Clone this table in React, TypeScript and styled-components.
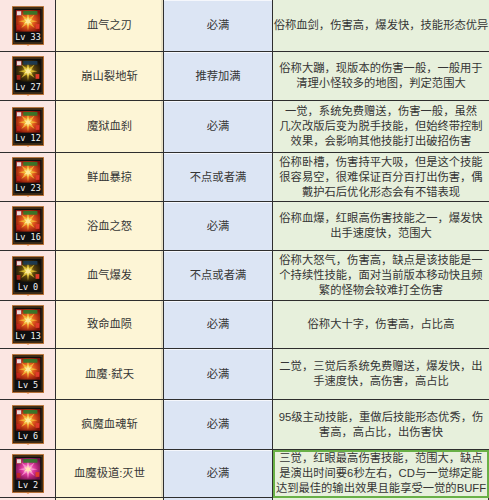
import React, { FunctionComponent } from 'react';
import styled, { createGlobalStyle } from 'styled-components';

type Art = 'red' | 'gold' | 'pink';

interface SkillRow {
  lv: number;
  name: string;
  rec: string;
  desc: string[];
  art: Art;
  height: number;
}

const rows: SkillRow[] = [
  {
    lv: 33,
    name: '血气之刃',
    rec: '必满',
    desc: ['俗称血剑，伤害高，爆发快，技能形态优异'],
    art: 'red',
    height: 52,
  },
  {
    lv: 27,
    name: '崩山裂地斩',
    rec: '推荐加满',
    desc: ['俗称大蹦，现版本的伤害一般，一般用于', '清理小怪较多的地图，判定范围大'],
    art: 'gold',
    height: 49,
  },
  {
    lv: 12,
    name: '魔狱血刹',
    rec: '必满',
    desc: [
      '一觉，系统免费赠送，伤害一般，虽然',
      '几次改版后变为脱手技能，但始终带控制',
      '效果，会影响其他技能打出破招伤害',
    ],
    art: 'red',
    height: 52,
  },
  {
    lv: 23,
    name: '鲜血暴掠',
    rec: '不点或者满',
    desc: [
      '俗称卧槽，伤害持平大吸，但是这个技能',
      '很容易空，很难保证百分百打出伤害，偶',
      '戴护石后优化形态会有不错表现',
    ],
    art: 'red',
    height: 49,
  },
  {
    lv: 16,
    name: '浴血之怒',
    rec: '必满',
    desc: ['俗称血爆，红眼高伤害技能之一，爆发快', '出手速度快，范围大'],
    art: 'red',
    height: 49,
  },
  {
    lv: 0,
    name: '血气爆发',
    rec: '不点或者满',
    desc: [
      '俗称大怒气，伤害高，缺点是该技能是一',
      '个持续性技能，面对当前版本移动快且频',
      '繁的怪物会较难打全伤害',
    ],
    art: 'gold',
    height: 50,
  },
  {
    lv: 13,
    name: '致命血陨',
    rec: '必满',
    desc: ['俗称大十字，伤害高，占比高'],
    art: 'red',
    height: 48,
  },
  {
    lv: 5,
    name: '血魔·弑天',
    rec: '必满',
    desc: ['二觉，三觉后系统免费赠送，爆发快，出', '手速度快，高伤害，高占比'],
    art: 'red',
    height: 51,
  },
  {
    lv: 6,
    name: '疯魔血魂斩',
    rec: '必满',
    desc: ['95级主动技能，重做后技能形态优秀，伤', '害高，高占比，出伤害快'],
    art: 'red',
    height: 50,
  },
  {
    lv: 2,
    name: '血魔极道:灭世',
    rec: '必满',
    desc: [
      '三觉，红眼最高伤害技能，范围大，缺点',
      '是演出时间要6秒左右，CD与一觉绑定能',
      '达到最佳的输出效果且能享受一觉的BUFF',
    ],
    art: 'pink',
    height: 48,
  },
];

const palettes: Record<Art, { outer: string; inner: string; glow: string }> = {
  red: { outer: '#7a0f06', inner: '#e0561c', glow: '#f7c93c' },
  gold: { outer: '#120c04', inner: '#5a430c', glow: '#f2d43a' },
  pink: { outer: '#6a0d44', inner: '#d9369a', glow: '#ff9fd6' },
};

const GlobalStyle = createGlobalStyle`
  html, body {
    margin: 0;
    padding: 0;
    background: #fbe6e2;
    overflow: hidden;
  }
  body {
    font-family: "Liberation Sans", "Noto Sans CJK SC", sans-serif;
  }
`;

const Table = styled.div`
  width: 489px;
  display: flex;
  flex-direction: column;
`;

const Row = styled.div<{ $height: number }>`
  display: grid;
  grid-template-columns: 56px 108px 109px 1fr;
  height: ${(p) => p.$height}px;
`;

const lineColor = '#2e2e2e';

const Cell = styled.div<{ $last?: boolean; $selected?: boolean }>`
  position: relative;
  box-sizing: border-box;
  display: flex;
  align-items: center;
  justify-content: center;
  border-bottom: 1px solid ${lineColor};
  border-right: ${(p) => (p.$last ? 'none' : `1px solid ${lineColor}`)};
  color: #353535;
  font-size: 11.3px;
  line-height: 15px;
  text-align: center;
  white-space: nowrap;
  overflow: hidden;
  outline: ${(p) => (p.$selected ? '2px solid #68b046' : 'none')};
  outline-offset: -2px;
  z-index: ${(p) => (p.$selected ? 1 : 0)};
`;

const IconCell = styled(Cell)`
  background: #fbe6e2;
`;

const NameCell = styled(Cell)`
  background: #fdf5d6;
  box-shadow: inset -2px 0 0 rgba(0, 0, 0, 0.08);
`;

const RecCell = styled(Cell)`
  background: #dce5f4;
  box-shadow: inset 0 1px 0 rgba(255, 255, 255, 0.7);
`;

const DescCell = styled(Cell)`
  background: #e7f0dc;
  flex-direction: column;
`;

const Filler = styled.div`
  height: 20px;
  display: grid;
  grid-template-columns: 56px 108px 109px 1fr;
`;

const FillCell = styled.div<{ $bg: string }>`
  background: ${(p) => p.$bg};
  border-right: 1px solid ${lineColor};
`;

const starPoints = (cx: number, cy: number, r1: number, r2: number, n: number): string => {
  const pts: string[] = [];
  for (let i = 0; i < n * 2; i += 1) {
    const r = i % 2 === 0 ? r1 : r2;
    const a = (Math.PI * i) / n - Math.PI / 2;
    pts.push(`${(cx + r * Math.cos(a)).toFixed(1)},${(cy + r * Math.sin(a)).toFixed(1)}`);
  }
  return pts.join(' ');
};

const SkillIcon: FunctionComponent<{ lv: number; art: Art; id: number }> = ({ lv, art, id }) => {
  const pal = palettes[art];
  const gid = `g${id}`;
  return (
    <svg width="32" height="40" viewBox="0 0 34 42">
      <defs>
        <radialGradient id={gid} cx="50%" cy="50%" r="60%">
          <stop offset="0%" stopColor={pal.glow} />
          <stop offset="45%" stopColor={pal.inner} />
          <stop offset="100%" stopColor={pal.outer} />
        </radialGradient>
      </defs>
      <rect x="0.5" y="0.5" width="33" height="40" fill="#1b130c" stroke="#b86a26" />
      <rect x="2" y="2" width="30" height="37" fill="#0e0e0e" stroke="#6b4a22" strokeWidth="0.8" />
      <rect x="4" y="4" width="26" height="23" fill={`url(#${gid})`} />
      <polygon points={starPoints(17, 16, 10, 3.5, 8)} fill={pal.glow} opacity="0.75" />
      <polygon points={starPoints(17, 16, 5, 2, 6)} fill="#fff3b0" opacity="0.8" />
      <rect x="5" y="5" width="5" height="5" fill="#e9d8d8" stroke="#a02020" strokeWidth="0.6" />
      <rect x="12" y="5" width="15" height="4" fill={art === 'gold' ? '#1c3b55' : '#2f7a2a'} opacity="0.9" />
      <rect x="25" y="19" width="4" height="5" fill="#e03a2a" />
      <rect x="5" y="20" width="4" height="5" fill="#c8281e" opacity="0.8" />
      <text
        x="17"
        y="36"
        fill="#f4f4f4"
        fontFamily="'DejaVu Sans Mono', monospace"
        fontSize="9"
        textAnchor="middle"
      >
        {`Lv ${lv}`}
      </text>
      <polygon points="15,41 19,41 17,42" fill="#e07a2a" />
    </svg>
  );
};

const App: FunctionComponent = () => (
  <>
    <GlobalStyle />
    <Table>
      {rows.map((row, i) => {
        const last = i === rows.length - 1;
        return (
          <Row key={row.name} $height={row.height}>
            <IconCell>
              <SkillIcon lv={row.lv} art={row.art} id={i} />
            </IconCell>
            <NameCell>{row.name}</NameCell>
            <RecCell>{row.rec}</RecCell>
            <DescCell $last $selected={last}>
              {row.desc.map((line) => (
                <span key={line}>{line}</span>
              ))}
            </DescCell>
          </Row>
        );
      })}
      <Filler>
        <FillCell $bg="#fbe6e2" />
        <FillCell $bg="#fdf5d6" />
        <FillCell $bg="#dce5f4" />
        <FillCell $bg="#e7f0dc" />
      </Filler>
    </Table>
  </>
);

export default App;
